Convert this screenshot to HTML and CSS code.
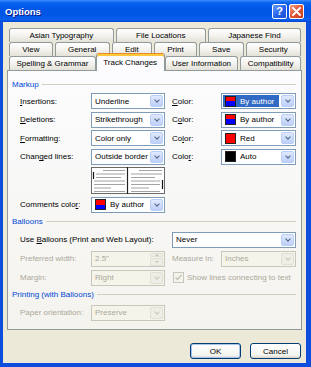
FILE: index.html
```html
<!DOCTYPE html>
<html lang="en">
<head>
  <meta charset="UTF-8" />
  <title>Options</title>
  <link rel="stylesheet" href="styles.css">
</head>
<body>
  <div class="window">
    <div class="titlebar">
      <span class="title">Options</span>
      <span class="cap help">?</span>
      <span class="cap close">
        <svg width="9" height="9" viewBox="0 0 9 9"><path d="M1 1L8 8M8 1L1 8" stroke="#fff" stroke-width="1.8" stroke-linecap="round"/></svg>
      </span>
    </div>

    <div class="frame">
      <!-- tab strip, three rows -->
      <div class="tabs">
        <div class="tab-row">
          <div class="tab">Asian Typography</div>
          <div class="tab">File Locations</div>
          <div class="tab">Japanese Find</div>
        </div>
        <div class="tab-row">
          <div class="tab">View</div>
          <div class="tab">General</div>
          <div class="tab">Edit</div>
          <div class="tab">Print</div>
          <div class="tab">Save</div>
          <div class="tab">Security</div>
        </div>
        <div class="tab-row">
          <div class="tab">Spelling &amp; Grammar</div>
          <div class="tab active">Track Changes</div>
          <div class="tab">User Information</div>
          <div class="tab">Compatibility</div>
        </div>
      </div>

      <div class="panel">
        <div class="group">Markup</div>
        <div class="grid markup">
          <span><u>I</u>nsertions:</span>
          <div class="combo"><span class="val">Underline</span><span class="arrow"></span></div>
          <span class="c3"><u>C</u>olor:</span>
          <div class="combo"><span class="val sel"><i class="sw author"></i>By author</span><span class="arrow"></span></div>

          <span><u>D</u>eletions:</span>
          <div class="combo"><span class="val">Strikethrough</span><span class="arrow"></span></div>
          <span class="c3">C<u>o</u>lor:</span>
          <div class="combo"><span class="val"><i class="sw author"></i>By author</span><span class="arrow"></span></div>

          <span><u>F</u>ormatting:</span>
          <div class="combo"><span class="val">Color only</span><span class="arrow"></span></div>
          <span class="c3">Co<u>l</u>or:</span>
          <div class="combo"><span class="val"><i class="sw red"></i>Red</span><span class="arrow"></span></div>

          <span>Chan<u>g</u>ed lines:</span>
          <div class="combo"><span class="val">Outside border</span><span class="arrow"></span></div>
          <span class="c3">Colo<u>r</u>:</span>
          <div class="combo"><span class="val"><i class="sw black"></i>Auto</span><span class="arrow"></span></div>

          <svg class="preview" width="74" height="27" viewBox="0 0 74 27">
            <rect x="0.5" y="0.5" width="73" height="26" fill="#fff" stroke="#6b6b6b"/>
            <line x1="36.5" y1="0" x2="36.5" y2="27" stroke="#222" stroke-width="1.2"/>
            <g stroke="#8c8c8c" stroke-width="0.8">
              <line x1="12" y1="3.5" x2="34" y2="3.5"/>
              <line x1="5" y1="7" x2="34" y2="7"/>
              <line x1="5" y1="10.5" x2="30" y2="10.5"/>
              <line x1="3" y1="14" x2="34" y2="14"/>
              <line x1="3" y1="17.5" x2="34" y2="17.5"/>
              <line x1="3" y1="21" x2="20" y2="21"/>
              <line x1="3" y1="24.5" x2="34" y2="24.5"/>
              <line x1="48" y1="3.5" x2="71" y2="3.5"/>
              <line x1="40" y1="7" x2="71" y2="7"/>
              <line x1="40" y1="10.5" x2="64" y2="10.5"/>
              <line x1="40" y1="14" x2="69" y2="14"/>
              <line x1="40" y1="17.5" x2="69" y2="17.5"/>
              <line x1="40" y1="21" x2="58" y2="21"/>
              <line x1="40" y1="24.5" x2="69" y2="24.5"/>
            </g>
            <line x1="2.5" y1="5" x2="2.5" y2="12" stroke="#111" stroke-width="1.2"/>
            <line x1="71.5" y1="13" x2="71.5" y2="22" stroke="#111" stroke-width="1.2"/>
          </svg>

          <span class="first">Comments colo<u>r</u>:</span>
          <div class="combo"><span class="val"><i class="sw author"></i>By author</span><span class="arrow"></span></div>
        </div>

        <div class="group gap">Balloons</div>
        <div class="grid balloons">
          <span class="span2">Use <u>B</u>alloons (Print and Web Layout):</span>
          <div class="combo wide"><span class="val">Never</span><span class="arrow"></span></div>

          <span class="off">Preferred width:</span>
          <div class="combo dis"><span class="val">2.5"</span><span class="updown"><i></i><i></i></span></div>
          <span class="c3 off">Measure in:</span>
          <div class="combo dis"><span class="val">Inches</span><span class="arrow"></span></div>

          <span class="off">Margin:</span>
          <div class="combo dis"><span class="val">Right</span><span class="arrow"></span></div>
          <span class="check off">
            <span class="chk"><svg width="9" height="9" viewBox="0 0 9 9"><path d="M1.5 4.5L3.5 6.5L7.5 2" fill="none" stroke="#c4c2b4" stroke-width="1.4"/></svg></span>
            Show lines connecting to text
          </span>
        </div>

        <div class="group gap">Printing (with Balloons)</div>
        <div class="grid printing">
          <span class="off">Paper orientation:</span>
          <div class="combo dis"><span class="val">Preserve</span><span class="arrow"></span></div>
        </div>
      </div>

      <div class="buttons">
        <div class="btn default">OK</div>
        <div class="btn">Cancel</div>
      </div>
    </div>
  </div>
</body>
</html>
```

FILE: styles.css
```css
:root {
  --face: #ece9d8;
  --frame: #0d4fdc;
  --tab-border: #919b9c;
  --pane: #fcfcfe;
  --group: #0046d5;
  --field-border: #7f9db9;
  --off-text: #aca899;
  --off-border: #c9c7ba;
}
* {
  box-sizing: border-box;
}
body {
  margin: 0;
  font-family: "Liberation Sans", Arial, sans-serif;
  font-size: 8px;
  color: #000;
}
u {
  text-decoration: underline;
  text-underline-offset: 1px;
}
.window {
  width: 311px;
  height: 367px;
  display: flex;
  flex-direction: column;
}
.titlebar {
  height: 22px;
  display: flex;
  align-items: center;
  gap: 2px;
  padding: 0 7px 0 5px;
  background: linear-gradient(#3d8eff 0%, #0a64f0 12%, #0058e8 35%, #0055e5 65%, #0a5ff0 88%, #0048d0 100%);
}
.title {
  flex: 1;
  color: #fff;
  font-weight: bold;
  font-size: 9.5px;
  text-shadow: 1px 1px #0f1c8a;
}
.cap {
  width: 15px;
  height: 15px;
  border: 1px solid #fff;
  border-radius: 2px;
  display: flex;
  align-items: center;
  justify-content: center;
  color: #fff;
  font-weight: bold;
  font-size: 11px;
}
.help {
  background: linear-gradient(135deg, #6c9cfa, #2462ec 55%, #1a4fd0);
}
.close {
  background: linear-gradient(135deg, #f3a58e, #e35a3a 45%, #c63e1e);
}
.frame {
  flex: 1;
  display: flex;
  flex-direction: column;
  border: solid var(--frame);
  border-width: 0 5px 4px 3px;
  background: var(--face);
  padding: 6px 4px 0 4px;
}

/* tabs */
.tabs {
  margin: 0 1px 0 2px;
}
.tab-row {
  display: flex;
  gap: 2px;
  height: 14px;
}
.tab {
  flex: 1 1 auto;
  padding: 0 4px;
  border: 1px solid var(--tab-border);
  border-bottom: 0;
  border-radius: 3px 3px 0 0;
  background: linear-gradient(#fff, #f4f3ef 50%, #e3e1d7);
  text-align: center;
  line-height: 13px;
  white-space: nowrap;
}
.tab.active {
  margin: -3px -2px -1px;
  position: relative;
  z-index: 1;
  background: var(--pane);
  border-top: 1px solid #e68b2c;
  box-shadow: inset 0 2px 0 #ffc83c;
  line-height: 17px;
}

/* pane */
.panel {
  flex: 1;
  border: 1px solid var(--tab-border);
  background: linear-gradient(var(--pane), #f4f3ee);
  padding: 8px 5px 0 4px;
}
.group {
  display: flex;
  align-items: center;
  gap: 3px;
  height: 10px;
  color: var(--group);
}
.group::after {
  content: "";
  flex: 1;
  border-top: 1px solid #d0d0bf;
}
.group.gap {
  margin-top: 4px;
}
.grid {
  display: grid;
  grid-template-columns: 71px 74px 56px 75px;
  grid-auto-rows: 16px;
  align-items: center;
  margin: 4px 0 0 8px;
}
.markup {
  grid-template-rows: repeat(4, 16px) 27px 16px;
  row-gap: 2.6px;
}
.balloons {
  margin-top: 5px;
  row-gap: 3px;
}
.printing {
  margin-top: 5px;
}
.c3 {
  padding-left: 7px;
}
.first {
  grid-column: 1;
  white-space: nowrap;
}
.span2 {
  grid-column: span 2;
  white-space: nowrap;
}
.preview {
  grid-column: 2;
  display: block;
}
.off {
  color: var(--off-text);
}

/* combo boxes */
.combo {
  height: 16px;
  display: flex;
  border: 1px solid var(--field-border);
  background: #fff;
}
.combo.wide {
  grid-column: span 2;
  margin-left: 7px;
}
.val {
  flex: 1;
  display: flex;
  align-items: center;
  gap: 4px;
  padding: 0 2px 0 3px;
  white-space: nowrap;
  overflow: hidden;
}
.val.sel {
  margin: 1px;
  padding-left: 2px;
  background: #316ac5;
  color: #fff;
}
.arrow {
  width: 13px;
  margin: 1px;
  border: 1px solid #b9cdf6;
  border-radius: 2px;
  background: linear-gradient(#e0e9fd, #bcd0f9);
  display: flex;
  align-items: center;
  justify-content: center;
}
.arrow::after {
  content: "";
  width: 3px;
  height: 3px;
  margin-top: -2px;
  border: solid #4d6185;
  border-width: 0 1.5px 1.5px 0;
  transform: rotate(45deg);
}
.sw {
  width: 11px;
  height: 11px;
  flex: none;
  border: 1px solid #222;
}
.sw.author {
  background: linear-gradient(#f00 50%, #00f 50%);
}
.sw.red {
  background: #f00;
}
.sw.black {
  background: #000;
}
.combo.dis {
  border-color: var(--off-border);
  background: #f5f4ea;
  color: var(--off-text);
}
.dis .arrow {
  border-color: #e2e0d6;
  background: #efeee6;
}
.dis .arrow::after {
  border-color: var(--off-border);
}
.updown {
  width: 13px;
  margin: 1px;
  display: flex;
  flex-direction: column;
  gap: 1px;
}
.updown i {
  flex: 1;
  border: 1px solid #e2e0d6;
  border-radius: 1px;
  background: #efeee6;
  display: flex;
  align-items: center;
  justify-content: center;
}
.updown i::after {
  content: "";
  border: 2px solid transparent;
  border-bottom-color: var(--off-border);
  margin-top: -2px;
}
.updown i + i::after {
  border-bottom-color: transparent;
  border-top-color: var(--off-border);
  margin-top: 2px;
}

/* checkbox */
.check {
  grid-column: span 2;
  margin-left: 8px;
  display: flex;
  align-items: center;
  gap: 3px;
  white-space: nowrap;
}
.chk {
  width: 11px;
  height: 11px;
  border: 1px solid var(--off-border);
  background: #f4f3ee;
  display: flex;
  align-items: center;
  justify-content: center;
}

/* dialog buttons */
.buttons {
  height: 33px;
  display: flex;
  justify-content: flex-end;
  gap: 9px;
  padding: 13px 1px 0 0;
}
.btn {
  width: 51px;
  height: 16px;
  border: 1px solid #003c74;
  border-radius: 3px;
  background: linear-gradient(#fff, #f4f4f0 80%, #d8d2c6);
  display: flex;
  align-items: center;
  justify-content: center;
}
.btn.default {
  box-shadow: inset 0 0 0 1px #a9c4ee;
}
```
